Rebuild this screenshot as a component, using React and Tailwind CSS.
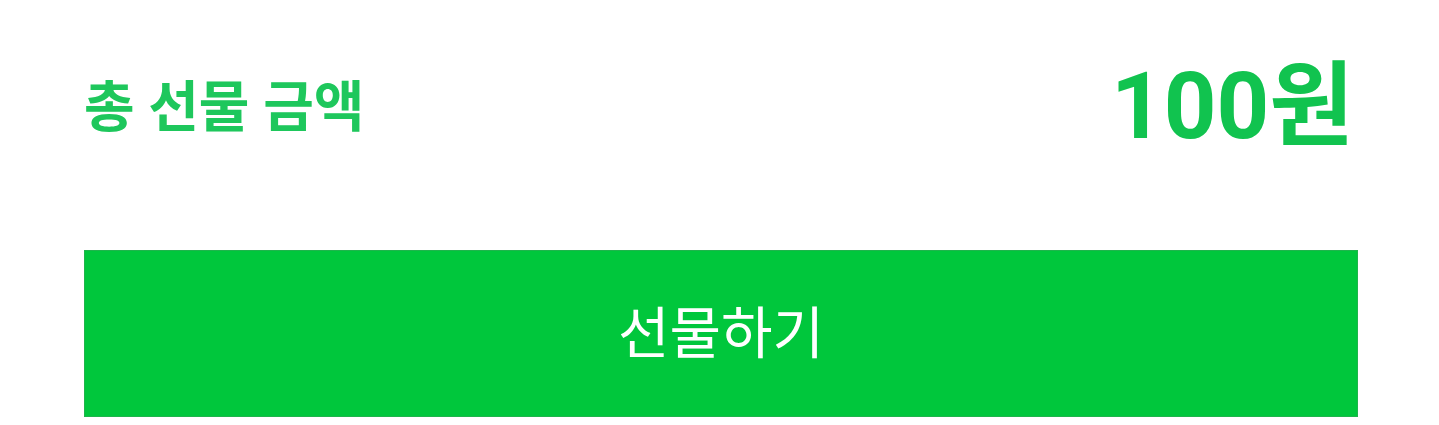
import React from 'react';

const font = { fontFamily: 'Roboto, "Noto Sans CJK KR", sans-serif' };

const GiftSummary = () => {
  return (
    <div className="w-[1439px] h-[425px] bg-white" style={font}>
      <div className="pl-[84px] pr-[81px] pt-[52px]">
        <div className="flex items-center justify-between h-[110px] pr-[4px]">
          <span className="text-[55px] font-bold text-[#1ec75c] leading-none">총 선물 금액</span>
          <span className="text-[92px] font-bold text-[#11c34f] leading-none">100원</span>
        </div>
        <button className="mt-[88px] w-full h-[167px] bg-[#00c73c] border border-[#1fb44c] text-white text-[56px] leading-none flex items-center justify-center">
          선물하기
        </button>
      </div>
    </div>
  );
};

export default GiftSummary;
